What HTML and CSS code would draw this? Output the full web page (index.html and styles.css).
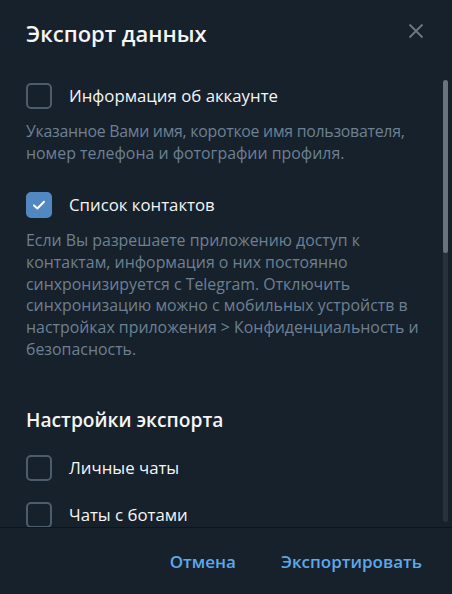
FILE: index.html
```html
<!DOCTYPE html>
<html lang="ru">
<head>
<meta charset="utf-8">
<title>Экспорт данных</title>
<link rel="stylesheet" href="styles.css">
</head>
<body>
<div class="dialog">
  <header class="header">
    <h1 class="title">Экспорт данных</h1>
    <button class="close" aria-label="Закрыть">
      <svg width="16" height="16" viewBox="0 0 16 16"><path d="M1.5 1.5 L14.5 14.5 M14.5 1.5 L1.5 14.5" stroke="currentColor" stroke-width="1.8" fill="none"/></svg>
    </button>
  </header>
  <div class="scroll">
    <div class="content">
      <label class="row">
        <span class="box"></span>
        <span class="label">Информация об аккаунте</span>
      </label>
      <p class="desc"><span class="tight">Указанное Вами имя, короткое имя пользователя,</span><br>номер телефона и фотографии профиля.</p>
      <label class="row row-second">
        <span class="box checked">
          <svg width="16" height="16" viewBox="0 0 16 16"><path d="M3 8.4 L6.4 11.5 L13 4.8" stroke="#fff" stroke-width="2" fill="none" stroke-linecap="round" stroke-linejoin="round"/></svg>
        </span>
        <span class="label">Список контактов</span>
      </label>
      <p class="desc">Если Вы разрешаете приложению доступ к<br>контактам, информация о них постоянно<br>синхронизируется с Telegram. Отключить<br>синхронизацию можно с мобильных устройств в<br>настройках приложения &gt; Конфиденциальность и<br>безопасность.</p>
      <h2 class="section">Настройки экспорта</h2>
      <div class="options">
        <label class="row"><span class="box"></span><span class="label">Личные чаты</span></label>
        <label class="row"><span class="box"></span><span class="label">Чаты с ботами</span></label>
      </div>
    </div>
    <div class="scrollbar"><div class="thumb"></div></div>
  </div>
  <footer class="footer">
    <button class="btn">Отмена</button>
    <button class="btn">Экспортировать</button>
  </footer>
</div>
</body>
</html>
```
FILE: styles.css
```css
* { box-sizing: border-box; }
html, body {
  margin: 0;
  padding: 0;
  background: #17212b;
}
body {
  font-family: "Open Sans", "Noto Sans", sans-serif;
  color: #f5f5f5;
}
.dialog {
  width: 452px;
  height: 594px;
  display: flex;
  flex-direction: column;
  overflow: hidden;
}
.header {
  height: 68px;
  flex: 0 0 68px;
  display: flex;
  align-items: center;
  justify-content: space-between;
  padding: 0 18px 0 26px;
}
.title {
  margin: 0 0 2px;
  font-size: 22px;
  font-weight: 600;
  line-height: 30px;
  color: #f5f5f5;
}
.close {
  width: 36px;
  height: 36px;
  margin-top: -6px;
  border: 0;
  padding: 0;
  background: transparent;
  color: #6c7883;
  display: flex;
  align-items: center;
  justify-content: center;
}
.scroll {
  position: relative;
  height: 460px;
  flex: 0 0 460px;
  overflow: hidden;
  border-bottom: 1px solid #0e151c;
}
.content {
  padding: 15px 0 0 26px;
}
.row {
  display: flex;
  align-items: center;
  gap: 17px;
  height: 26px;
}
.row-second { margin-top: 28px; }
.box {
  width: 26px;
  height: 26px;
  flex: 0 0 26px;
  border: 2px solid #4e5d6c;
  border-radius: 5px;
  display: flex;
  align-items: center;
  justify-content: center;
}
.box.checked {
  background: #5288c1;
  border-color: #5288c1;
}
.label {
  font-size: 16.8px;
  line-height: 22px;
  color: #f5f5f5;
  white-space: nowrap;
}
.desc {
  margin: 12px 0 0;
  font-size: 15.9px;
  line-height: 21.67px;
  color: #6d8093;
  white-space: nowrap;
}
.tight {
  letter-spacing: -0.28px;
}
.section {
  margin: 47px 0 0;
  font-size: 19.2px;
  font-weight: 600;
  line-height: 26px;
  color: #f5f5f5;
}
.options {
  margin-top: 22px;
  display: flex;
  flex-direction: column;
  gap: 21px;
}
.scrollbar {
  position: absolute;
  top: 12px;
  right: 4px;
  width: 5px;
  height: 442px;
  border-radius: 3px;
  background: #28323d;
}
.thumb {
  height: 173px;
  border-radius: 3px;
  background: #6a737d;
}
.footer {
  flex: 1;
  display: flex;
  align-items: center;
  justify-content: flex-end;
  gap: 45px;
  padding: 2px 30px 0 0;
}
.btn {
  border: 0;
  padding: 0;
  background: transparent;
  font-family: "Open Sans", "Noto Sans", sans-serif;
  font-size: 17px;
  line-height: 24px;
  font-weight: 600;
  color: #5fa8e8;
  white-space: nowrap;
}
```
